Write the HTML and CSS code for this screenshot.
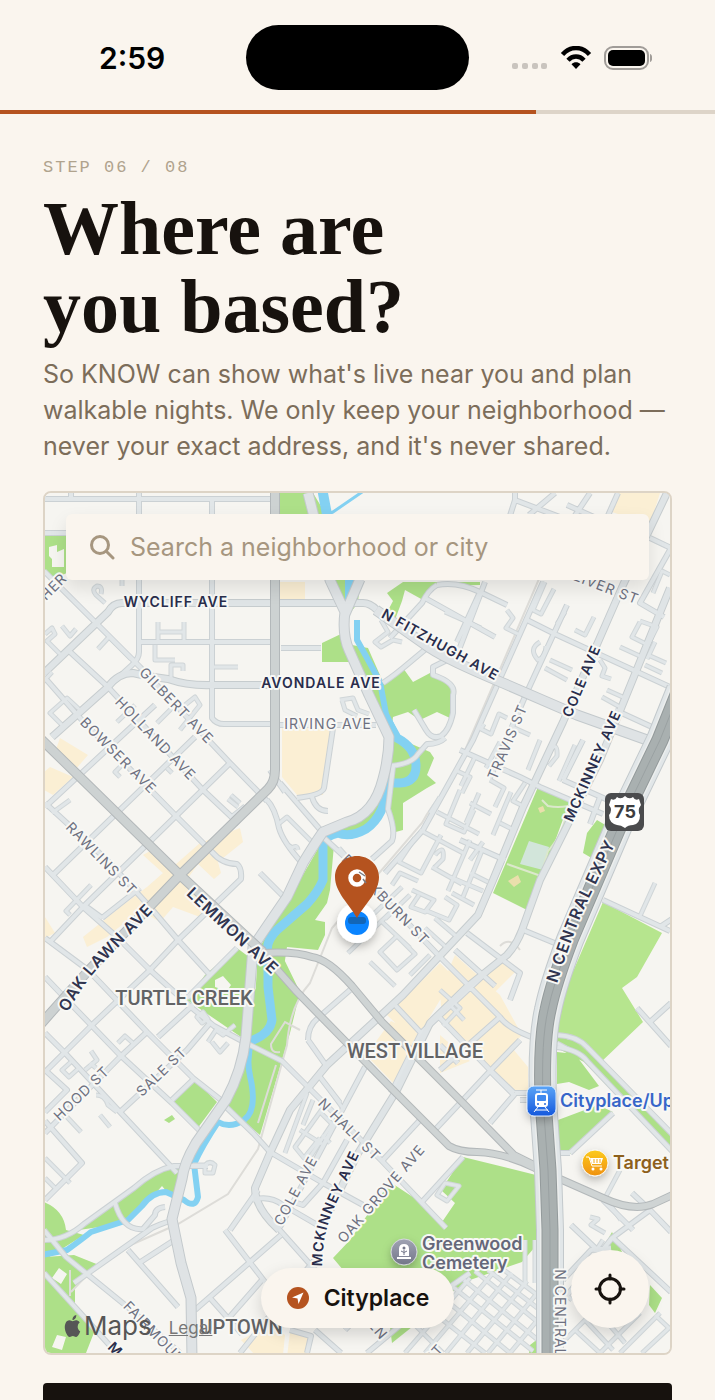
FILE: index.html
```html
<!DOCTYPE html>
<html lang="en">
<head>
<meta charset="utf-8">
<meta name="viewport" content="width=device-width, initial-scale=1">
<title>Where are you based?</title>
<link rel="stylesheet" href="styles.css">
</head>
<body>
<div class="screen">
  <header class="status">
    <time class="status-time">2:59</time>
    <div class="island"></div>
    <div class="status-icons">
      <svg width="36" height="32" viewBox="0 0 36 32" fill="#c9c4be" aria-hidden="true"><rect x="0" y="21" width="6" height="6" rx="2"/><rect x="10" y="21" width="6" height="6" rx="2"/><rect x="20" y="21" width="6" height="6" rx="2"/><rect x="29" y="21" width="6" height="6" rx="2"/></svg>
      <svg width="32" height="24" viewBox="0 0 32 24" fill="none" stroke="#000" stroke-width="4.4" aria-hidden="true"><path d="M2.500 8.500C10-.200 22-.200 29.500 8.500"/><path d="M8 14.200c4.500-5 11.500-5 16 0"/><path d="M11.500 18.200c2.700-2.600 6.300-2.600 9 0L16 23z" fill="#000" stroke="none"/></svg>
      <svg width="48" height="24" viewBox="0 0 48 24" aria-hidden="true"><rect x="1" y="1" width="43" height="22" rx="8" fill="none" stroke="#a09c98" stroke-width="2"/><rect x="4" y="4" width="37" height="16" rx="5"/><path d="M46 8c3 1 3 7 0 8z" fill="#a09c98"/></svg>
    </div>
  </header>
  <div class="progress"><div class="progress-fill"></div></div>

  <main class="content">
    <p class="step">STEP 06 / 08</p>
    <h1>Where are<br>you based?</h1>
    <p class="intro">So KNOW can show what's live near you and plan walkable nights. We only keep your neighborhood — never your exact address, and it's never shared.</p>

    <section class="map">
      <svg class="map-art" viewBox="44 493 627 860" preserveAspectRatio="xMidYMid slice" role="img" aria-label="Neighborhood map">
        <defs>
          <linearGradient id="blue" x2="0" y2="1"><stop stop-color="#5aa5f8"/><stop offset="1" stop-color="#1558dc"/></linearGradient>
          <linearGradient id="gold" x2="0" y2="1"><stop stop-color="#fccb1c"/><stop offset="1" stop-color="#f09110"/></linearGradient>
          <linearGradient id="slate" x2="0" y2="1"><stop stop-color="#a0a3b3"/><stop offset="1" stop-color="#74778a"/></linearGradient>
          <filter id="soft" x="-50%" y="-50%" width="200%" height="200%"><feDropShadow dx="0" dy="4" stdDeviation="4" flood-opacity=".25"/></filter>

          <g id="lanes">
            <path d="M158 622v20M184 622v20M158 632h26M155 645v15h20M171 682v-17h12v6M213 667h25M122 578v8M105 603l-9-8q-5-6 1-9 6 0 4 8M98 649l11-12 22 22M45 634l7-6 3 6-8 7 15 15M62 626l8 10 6-7M50 713l17-15 13 12-16 17zM52 672l-9 10M185 705l10-8 5 8-20 25M172 708l-15 15M117 722l18-17"/>
            <path d="M120 777l-5-5 6-6M70 800l-18 13M172 773l-5-5M238 807l-10-8M240 803l-9-8M91 885l-25 26 4 4M245 806l-15 12M277 825l10-8 24 24M293 852q-8-10-1-4 5-4 6 2M347 857l-8-9"/>
            <path d="M62 1070l10-9 7 7-10 9zM85 1070l12-10-6-9M90 1063l6 5M100 1115l10 12M118 1043l7-7 9 8M197 1017l6-5 5 7-6 4zM208 1042l8-12 7 5 12-10M212 1042l8 10 8-9M96 1095q9 0 12 10l9 7M45 1158l25 25M45 1178l10 10M67 1117l14 15M193 1165h12q5-5 10 0l-2 8h-8v-8"/>
            <path d="M307 1093l-22 60M313 1100l-10 25M325 1105l-30 42 9 11 16-20M300 1130l22 14M320 1112l12 12-24 36M330 1090l14 20M322 1135l8 8"/>
            <path d="M381 620l7 12-13 10 6 5 12-7 9 2M340 700l13-2 5 12 11 4M342 700l3 10 12 6M445 612l36 16M527 692l-17-8M545 582l-12 28 8 4 13-25M575 630l10 5 9-18M507 610l6 8-7 10 12 6M550 660l22 10M545 668l22 12M565 612l-8 12M640 622l-8 15 16 8 9-18-17-6M620 647l22 10M648 655l18 8M645 665l17 8M655 642l-8 17M670 575l-8-4-9 22M607 690l18 8M602 697l18 10M600 660l5 8-3 8 9 3M484 724l-3 5 10 5 8-20 8 4M540 642q-12 7-2 18 8-3 8-14M530 735l-20-9M548 753q10-14 9 3l-8 10"/>
            <path d="M475 757l-14 29M500 742l-14 26M455 770l15 7-8 16M490 780l14 8-9 19M470 803l21 11M479 793l-13 30M511 792l-18 43M500 823l12 6M525 783l-12 18 12 6M540 740l-12 30M575 745l-16 36M460 790l-14 34 18 8 10-22M440 797l-10 16M420 830l45 24M437 812l42 22M415 838l-16 24 22 11 20-38M435 855q10-12 8 4l-8 8M432 867l30 17M470 840l-22 51M483 848l-20 49M450 877l33 14M503 860l-24 55M452 893l22 12M470 873l18 9M392 885l8-12 18 8M412 890l22 10-9 12-14-5 8-12M410 895l-25 24M445 897l12 8-8 15-22-9M362 925l40-38M380 920l30 28M348 953l45-43M380 952l17-16 18 18-18 16zM370 962l25 24M410 975l20-20M425 928l22 20M435 918l21 18M470 860l13-18M600 878l-7 12"/>
            <path d="M655 883l-15 33M570 1050l-13-7M620 1170l-15 28 16 22M590 1217l8 2-7 6 14 8M603 1240l-8 12M440 990l20 18-17 18M450 1005l14 15M445 1183l-8 12 10 6 12-15zM525 1240v45M535 1240v43"/>
            <path d="M430 1310l55 43M442 1297l68 56M453 1287l80 64M464 1280l74 60M475 1271l64 52M488 1270l52 40M500 1267l40 30M405 1353l65-75M425 1353l68-80M446 1353l66-80M467 1353l60-72M488 1353l51-62M510 1353l30-36M415 1325l28 28M560 1345l50-50M575 1330l25 23M585 1320l28 30M595 1308l30 35M600 1353l40-40M620 1353l40-40M560 1290l12 10M642 1353l28-26M655 1315l15 14"/>
          </g>
          <g id="streets">
            <path d="M44 499h231M71 493v6M139 493v159q0 7-8 14l-23 21M212 499v219q4 6 12 6h51M44 533h31M139 642h136M281 648h40M275 725h101M44 571l96 96 90 96 37 38M68 650l40 37 95 103 36 34M45 678l35 40 97 99 35 35q10 12 25 12 5 4 4 15l-63 61-28 30-58 55-47 47"/>
            <path d="M45 807L155 705M53 875L195 737M50 942l33-35 147-144M102 918l38-30M45 803l62 57 43 47 28 33 32 35M45 867l38 40 34 30 33 33 42 38 22 18 30 16 38 19 24 24 76 76 64 67M45 938l43 32 59 62 46 46 28 22M45 977l22 23 53 55 52 48 27 27M45 1033l20 20 55 59 57 61M45 1133l75-76 27-25M120 1112l67-62 23-27M158 1037l35-32M172 1100l22-21M187 998l50-50M102 918l-18-13M45 1200l37-37-37-42M45 1070l22 20-22 22"/>
            <path d="M44 1240q22 0 40-16l50-36q20-18 40-22h34M115 1203q8 28 28 26l12-14q0-7 10-8M222 1103l31 30 17 19 53 31 40 22M253 1200q16-5 30 5l38 22M308 1040l17 24M308 1040q0-14 10-22l32-28M320 1077l20 26M365 1067l-85 160M347 1140l-24 43-20 22-12-4M383 1160l37-40M432 1133l58-62 30-31M463 1157l-42 46M490 1123l24-28-24-24M515 1093h13M393 1003l28 30 38-35 28-26M421 1033l-30 60M440 1018l50 52 24 23M440 1070l60-53M440 957l60 60q8 12 37 22M440 1045l18 18"/>
            <path d="M323 837l24 22 93 98M280 783l43 50M333 728l-9 60q-2 7-27 10M312 797q4 14 16 14M267 800q8 8 12 28 4 14 23 35M260 873l26 26M270 770l15 22M393 767l-5 42q8 22 4 32l-20 18M390 766q22-2 28-12l9-10q12 0 18-6M383 683q12-8 26-20l18-15M437 585q-9 5-15 18l-32 35M437 585q20-4 43 7l27 13M425 598l70 39M485 582l-28 73-24 12v8q24 8 20 20v18q-4 18-12 23-9 4-15-6l-12-20M480 592l-23 50"/>
            <path d="M543 582l-40 90-30 68-50 90-38 43M567 605l-40 87-37 86M527 620l30 15 113 52M515 500l-8 25M515 500l95 36M515 493v7M555 493l-26 22M590 493l-20 30M567 505l45 20M650 538l21 10-31 55 24 14M618 493l-20 45M460 750l60 27 20 10 63 27M563 780l45 20M583 740l-20 40M600 797l-10 27M460 840l45 20M523 930l34 14M467 933l53 40-10 27M455 950l40 36M603 900l67 31M660 927l12-8M615 710l50 23M637 1008l34 38M650 1022l21-19M570 1153l43-40M558 1153h12M603 1200l30 30M612 1237l59 55M561 1303l51-65 38-28 21 22M650 1210l-18-17M571 1225l40 38M563 1280l28-30 20-2"/>
            <path d="M44 1230l22 27 64 52 50 44M44 1273l69 76M128 1250l50 57M74 1283l78-55q20-9 24-7M139 1263l34-22M195 1310l86-75M225 1230l40 52M277 1227l40 45M240 1353l80-100M262 1280l-35 40M210 1298l32 36M290 1330l21 6-4 17M315 1330l26 23M367 1353l60-50 43-30M345 1330l22-22M230 1230l28-40M545 1100h-25"/>
            <path d="M557 1047q22 3 30 14l85 90M557 1035q20 1 30 12l86 88"/>
          </g>
          <g id="avenues">
            <path d="M44 673l64-61q5-9 14-9h241q7 0 14 7l53 38M52 737l56-50q10-14 25-14 12 3 35 6 20 7 45 6h60M667 493l-44 92-60 137-40 85-30 73-15 35-75 80-76 70-37 45-20 43-15 35q0 20 24 42M670 588l-70 172-60 120-18 50q-5 14-15 25l-40 32-37 36-33 67-40 65-35 72M523 807l-30 73"/>
          </g>
          <g id="boulevards">
            <path d="M308 493l22 87 15 32q-3 22 4 38l20 45 20 42q0 20-6 42-9 36-36 43l-24 10q-6 8-20 31l-16 34q-24 35-34 50l-7 90q-4 34-20 63l-30 43q-12 20-14 36l-10 40 9 44 10 35 1 60M345 614l15-35M376 610l54 38q18 12 73 35l74 32 70 25"/>
          </g>
          <path id="arterials" d="M275 493v277q0 12-7 19l-88 86-92 96-48 54M40 738l140 137 83 77"/>
          <path id="collectors" d="M258 948l39 44 96 98 56 56q10 6 28 6 28 1 58 16l68 30q30 14 50 6l30-14M262 953q34-2 50 4 16 2 40 29l30 36 81 81 51 52 30 15"/>
          <path id="freeway" d="M680 690l-20 50-40 83-50 117q-17 45-22 70-7 30-5 90l5 70 2 60v133"/>
          <path id="oaklawn" d="M63 1023Q80 985 106 960L162 902"/>
          <path id="expy" d="M554 993Q575 925 592 892L620 834"/>
          <path id="mck" d="M323 1284Q319 1240 335 1206L367 1138"/>
        </defs>

        <rect x="44" y="493" width="627" height="860" fill="#f6f5f1"/>

        <g fill="#fbefd4">
          <path d="M280 582h25v20h-25zM282 728h51l-10 67h-26l-15-18zM618 493h42l-10 32-38-13zM60 738l28 17-13 15-20-18zM50 767l23 10-20 18-9-5v-18z"/>
          <path d="M143 855L155 848 175 865 200 843 240 828 243 842 218 862 221 873 214 879 198 864 188 878 205 900 200 917 173 907 160 922 140 910 107 937 87 947 83 937 123 905 147 887 163 873zM45 917l10 16-10 5z"/>
          <path d="M387 1015L440 963 457 980 440 1000 422 1030 408 1035zM440 990L455 955 500 995 522 1035 490 1070 442 1022zM366 1055l25-34 30 14-28 48zM440 1035l30 26-30 12zM490 1071l23-22 15 18v23h-17zM503 958l14 12-30 30-16-12zM241 1340l29-16 15 11-2 20h-28zM290 1332l20 5-4 20h-19z"/>
        </g>
        <g fill="#ade088">
          <path d="M279 493h34l17 28h-51zM44 535h31v34l-25 12-6-9zM332 580h28l-2 23-11 14zM322 643l21-10 8 29h-29zM403 582h77v3l-43 1-14 14-18-10-3 11-9 24-8-9 8-15-6-8zM107 606h8l-4 4z"/>
          <path d="M352 645L368 648 383 682 403 668 413 682 430 673 450 683 456 697 450 718 437 712 420 720 408 712 393 717 391 735 430 752 434 758 427 775 436 783 427 788 403 803 403 830 392 833 390 785 380 808 365 830 335 834 360 815 385 785 390 745 370 690z"/>
          <path d="M323 840L334 845 330 890 327 903 315 920 325 922 325 935 318 950 287 947 285 960 280 985 268 1000 255 1000 258 950 300 880z"/>
          <path d="M255 990L282 955 300 992 290 1033 280 1067 260 1135 222 1103 238 1080 247 1030z"/>
          <path d="M538 787l32 13-28 77-15 33-34-17zM597 820l10 6 2 14-14 20-12-7 4-20zM557 1052l18 2 24 32-10 4-20-8-12 2zM570 1040h9l92 94v18l-87-90-27-14v-12zM558 1120l40-15 15 7-42 42h-13z"/>
          <path d="M463 1157L536 1175 541 1240 522 1262 470 1280 440 1300 360 1290 333 1258 350 1240 390 1182 425 1205 440 1225 455 1203 441 1190z"/>
          <path d="M237 948l16 12v40l-12 37-54-37 18-25zM194 1079l23 23-20 27-25-26zM178 1166l5 18-11 14-10-12-15 17-20 20-55 8 83-59zM44 1202q20 8 22 28l18 5-40 25v-58zM44 1257l30-2 25 10-24 23v22l20 20-9 23H44zM612 1232l10 20-30 15zM650 1285l12 13-7 15-6-8zM390 1327h22l-20 16zM530 1345l9-7v15h-10zM164 1120l8-5 3 4-6 4zM512 1030l22 10v-3z"/>
        </g>
        <path d="M603 902L662 933 637 977 622 988 643 1022 600 1063 573 1040 555 1035 565 990z" fill="#b6e58e"/>
        <g fill="#f6f5f1"><path d="M49 547l8-2v7l7-3v18h-12v-8l-3-3zM215 980l8-4 8 9-4 6-12-4zM59 1268l8 6-6 10-9-6zM57 1335l9 2-4 13-10-3z"/></g>
        <path d="M529 841l20 6-6 23-23-6z" fill="#d2e5da"/><path d="M508 881l10-6 3 7-7 5zM538 808l5-2 2 5-5 2z" fill="#eadfac"/>
        <path d="M542 800l6 6q10 2 20 0-4 28-20 45l-7 24M507 864l34 12" fill="none" stroke="#dce8cc" stroke-width="2"/>

        <g fill="none" stroke="#83d1f2" stroke-linejoin="round">
          <path d="M325 515l8-3 32-22" stroke-width="3"/><path d="M322 488l6 32M350 578v22" stroke-width="10"/>
          <path d="M357 620v20l10 18 13 24 6 32 11 22" stroke-width="6"/>
          <path d="M388 722L397 738Q416 748 416 766Q416 782 400 783H387Q386 815 366 829Q350 838 338 833Q322 836 323 848V880Q318 892 307 904L277 930Q265 942 268 953V987L272 1020Q270 1035 248 1042" stroke-width="9"/>
          <path d="M252 1040q-6 18-2 36q8 34-6 44-14 9-26 2-16 24-24 42l4 33q-3 12-14 3l-18-8q-14 0-24 14l-14 14-37 12q-10 8-24 18l-25 5" stroke-width="6"/>
        </g>

        <path d="M545 565l-95 220q-20 22-28 38l-90 105-22 55q-20 22-23 62l-29 104-30 45-50 30-45 20-45 30-17 18M300 1030l-15-8-14 22q0 10 9 8M276 1065l-18 58M500 946q10-10 20 4M70 1270v26" class="rail"/>
        <use href="#lanes" class="lane edge"/><use href="#streets" class="street edge"/><use href="#avenues" class="avenue edge"/>
        <use href="#lanes" class="lane"/><use href="#streets" class="street"/><use href="#avenues" class="avenue"/>
        <use href="#collectors" class="collector edge"/><use href="#collectors" class="collector"/>
        <use href="#boulevards" class="boulevard edge"/><use href="#boulevards" class="boulevard"/>
        <use href="#arterials" class="arterial edge"/><use href="#arterials" class="arterial"/>
        <use href="#freeway" class="frontage edge"/><use href="#freeway" class="frontage"/><use href="#freeway" class="shoulder"/><use href="#freeway" class="freeway edge"/><use href="#freeway" class="freeway"/><use href="#freeway" class="median"/>

        <g class="label minor">
          <text transform="translate(57 590) rotate(-45)">HER</text>
          <text x="328" y="729">IRVING AVE</text>
          <text transform="translate(173 709) rotate(46)">GILBERT AVE</text>
          <text transform="translate(152 742) rotate(46)">HOLLAND AVE</text>
          <text transform="translate(115 759) rotate(45)">BOWSER AVE</text>
          <text transform="translate(98 862) rotate(46)">RAWLINS ST</text>
          <text transform="translate(599 590) rotate(21)">OLIVER ST</text>
          <text transform="translate(512 744) rotate(-67)">TRAVIS ST</text>
          <text transform="translate(382 903) rotate(46)">BLACKBURN ST</text>
          <text transform="translate(85 1097) rotate(-44)">HOOD ST</text>
          <text transform="translate(165 1075) rotate(-44)">SALE ST</text>
          <text transform="translate(346 1133) rotate(45)">N HALL ST</text>
          <text transform="translate(300 1193) rotate(-62)">COLE AVE</text>
          <text transform="translate(385 1197) rotate(-49)">OAK GROVE AVE</text>
          <text transform="translate(163 1349) rotate(46)">FAIRMOUNT ST</text>
          <text transform="translate(555 1336) rotate(90)">N CENTRAL EXPY</text>
          <text transform="translate(365 1322) rotate(50)">ALLEN</text>
          <text transform="translate(438 1357) rotate(-48)">ST</text>
        </g>
        <g class="label major">
          <text x="176" y="607">WYCLIFF AVE</text>
          <text x="321" y="688">AVONDALE AVE</text>
          <text transform="translate(438 649) rotate(29)">N FITZHUGH AVE</text>
          <text transform="translate(586 683) rotate(-67)">COLE AVE</text>
          <text transform="translate(597 768) rotate(-66)">MCKINNEY AVE</text>
          <text><textPath href="#mck" startOffset="50%">MCKINNEY AVE</textPath></text>
          <text transform="translate(112 1353) rotate(45)">M</text>
        </g>
        <g class="label trunk">
          <text transform="translate(229 935) rotate(43)">LEMMON AVE</text>
          <text><textPath href="#oaklawn" startOffset="50%">OAK LAWN AVE</textPath></text>
          <text><textPath href="#expy" startOffset="50%">N CENTRAL EXPY</textPath></text>
        </g>
        <g class="label district">
          <text x="184" y="1005">TURTLE CREEK</text><text x="415" y="1058">WEST VILLAGE</text><text x="241" y="1334">UPTOWN</text>
        </g>

        <g><rect x="605" y="793" width="39" height="38" rx="6" fill="#4a4b4d"/><path d="M611 799q4 2 6-2 4 3 8-1 4 4 8 1 2 4 6 2l2 6q-4 5-1 10 0 9-7 10-5 0-8 3-4-3-8-3-8-2-8-10 4-5 0-10z" fill="#fff"/><text x="625" y="818" class="shield">75</text></g>

        <g class="label poi">
          <g filter="url(#soft)"><rect x="527" y="1086" width="29" height="30" rx="7" fill="url(#blue)" stroke="#dceafb"/></g>
          <g fill="none" stroke="#fff"><rect x="535" y="1093" width="13" height="14" rx="3" fill="#fff" stroke="none"/><path d="M536 1090h11M541 1090v3M538 1107l-4 5M545 1107l4 5M535 1110h13"/><rect x="537" y="1095" width="9" height="6" rx="1" fill="#3f89ef" stroke="none"/><circle cx="538" cy="1104" r="1" fill="#286bdc" stroke="none"/><circle cx="545" cy="1104" r="1" fill="#286bdc" stroke="none"/></g>
          <text x="560" y="1107" fill="#3766c9">Cityplace/Uptown</text>
          <g filter="url(#soft)"><circle cx="595" cy="1163" r="13" fill="url(#gold)"/></g>
          <path d="M586 1157h3l3 9h10" fill="none" stroke="#fff"/><path d="M590 1158h13l-2 6h-9z" fill="#fff" stroke="none"/><path d="M594 1159v4M597 1159v4M600 1159v4" fill="none" stroke="#f5a915"/><g fill="#fff" stroke="none"><circle cx="593" cy="1169" r="1.500"/><circle cx="601" cy="1169" r="1.500"/></g>
          <text x="613" y="1169" fill="#8d601c">Target</text>
          <g filter="url(#soft)"><circle cx="404" cy="1252" r="13" fill="url(#slate)" stroke="#d5d6dc"/></g>
          <path d="M399 1256v-7q0-5 5-5t5 5v7zM397 1257h14v2h-14z" fill="#fff" stroke="none"/><path d="M404 1255v-5M401 1251q3 3 6 0" fill="none" stroke="#74778a"/><circle cx="404" cy="1248" r="1.500" fill="#74778a" stroke="none"/>
          <text x="422" y="1250" fill="#65677a">Greenwood</text><text x="422" y="1269" fill="#65677a">Cemetery</text>
        </g>

        <g filter="url(#soft)"><circle cx="357" cy="923" r="20" fill="#fff"/></g>
        <circle cx="357" cy="923" r="12" fill="#0a84ff"/><rect x="348" y="917" width="18" height="7" rx="3" fill="#1266b8"/>
        <path d="M357 856c12 0 22 9 22 21 0 15-14 27-22 41-8-14-22-26-22-41 0-12 10-21 22-21z" fill="#b5531f"/>
        <circle cx="357" cy="878" r="6.500" fill="none" stroke="#fff" stroke-width="4.500"/><path d="M359 872l6 4M363 879l3 4" stroke="#777b83" stroke-width="1.500"/>
      </svg>

      <div class="attribution">
        <svg width="19" height="22" viewBox="0 0 24 24" preserveAspectRatio="none" fill="#565656" aria-hidden="true"><path d="M12.152 6.896c-.948 0-2.415-1.078-3.960-1.040-2.040.027-3.910 1.183-4.961 3.014-2.117 3.675-.546 9.103 1.519 12.090 1.013 1.454 2.208 3.090 3.792 3.039 1.520-.065 2.090-.987 3.935-.987 1.831 0 2.350.987 3.960.948 1.637-.026 2.676-1.480 3.676-2.948 1.156-1.688 1.636-3.325 1.662-3.415-.039-.013-3.182-1.221-3.220-4.857-.026-3.040 2.480-4.494 2.597-4.559-1.429-2.090-3.623-2.324-4.390-2.376-2-.156-3.675 1.090-4.610 1.090zM15.530 3.830c.843-1.012 1.400-2.427 1.245-3.830-1.207.052-2.662.805-3.532 1.818-.780.896-1.454 2.338-1.273 3.714 1.338.104 2.715-.688 3.559-1.701"/></svg>
        <span class="maps-name">Maps</span>
        <a class="legal" href="#legal">Legal</a>
      </div>

      <div class="controls">
        <label class="search">
          <svg width="26" height="26" viewBox="0 0 26 26" fill="none" stroke="#a6967f" stroke-width="3" stroke-linecap="round" aria-hidden="true"><circle cx="11" cy="11" r="8.500"/><path d="M17.500 17.500L24 24"/></svg>
          <input type="search" placeholder="Search a neighborhood or city" aria-label="Search a neighborhood or city">
        </label>
        <div class="controls-bottom">
          <button class="place" type="button">
            <svg width="24" height="24" viewBox="0 0 24 24" aria-hidden="true"><circle cx="12" cy="12" r="11" fill="#b5531f"/><path d="M17.500 6.500L6 11.500l5.500 1L12.500 18z" fill="#fff"/></svg>
            Cityplace
          </button>
          <button class="locate" type="button" aria-label="Use my location">
            <svg width="32" height="32" viewBox="0 0 32 32" fill="none" stroke="#17120e" stroke-width="3" stroke-linecap="round" aria-hidden="true"><circle cx="16" cy="16" r="10.500"/><path d="M16 2v4M16 26v4M2 16h4M26 16h4"/></svg>
          </button>
        </div>
      </div>
    </section>

    <button class="cta" type="button" aria-label="Continue"></button>
  </main>
</div>
</body>
</html>
```
FILE: styles.css
```css
* { box-sizing: border-box; }
body { margin: 0; background: #faf5ee; color: #17120e; font-family: Inter, "Liberation Sans", sans-serif; }
h1, p { margin: 0; }
button { border: 0; font: inherit; color: inherit; }
.screen { height: 100vh; overflow: hidden; }

.status { display: grid; grid-template-columns: 147px auto 1fr; align-items: center; height: 110px; padding: 5px 63px 0 99px; }
.status-time { font-size: 30px; font-weight: 600; color: #000; }
.island { width: 223px; height: 65px; border-radius: 33px; background: #000; }
.status-icons { display: flex; align-items: center; justify-content: flex-end; gap: 12px; }

.progress { height: 4px; background: #ddd4c8; }
.progress-fill { width: 75%; height: 100%; background: #b5531f; }

.content { padding: 42px 43px 0; }
.step { font: 17px/24px "Liberation Mono", monospace; letter-spacing: 2px; color: #b0a38d; }
h1 { margin-top: 9px; font: bold 76px/78px "Liberation Serif", serif; }
.intro { margin-top: 11px; font-size: 25px; line-height: 36px; color: #7c6d5a; }

.map { position: relative; margin-top: 27px; aspect-ratio: 629 / 864; border: 2px solid #ddd4c6; border-radius: 8px; overflow: hidden; }
.map-art { position: absolute; inset: 0; width: 100%; height: 100%; }
.map-art use { fill: none; stroke-linejoin: round; stroke-linecap: butt; }
.lane { stroke: #e1e6e8; stroke-width: 3px; }
.lane.edge { stroke: #d0d6d8; stroke-width: 5px; }
.street { stroke: #e1e6e8; stroke-width: 4px; }
.street.edge { stroke: #cbd1d4; stroke-width: 6px; }
.avenue { stroke: #dfe4e6; stroke-width: 6px; }
.avenue.edge { stroke: #c6ccce; stroke-width: 8px; }
.collector { stroke: #cfd4d4; stroke-width: 6px; }
.collector.edge { stroke: #b3b8ba; stroke-width: 8px; }
.boulevard { stroke: #dfe3e5; stroke-width: 9px; }
.boulevard.edge { stroke: #c3c9cc; stroke-width: 11px; }
.arterial { stroke: #cdd2d2; stroke-width: 8px; }
.arterial.edge { stroke: #b3b8ba; stroke-width: 10px; }
.frontage { stroke: #e1e6e8; stroke-width: 26px; }
.frontage.edge { stroke: #c3c9cc; stroke-width: 28px; }
.shoulder { stroke: #eceeed; stroke-width: 20px; }
.freeway { stroke: #a9b0b0; stroke-width: 15px; }
.freeway.edge { stroke: #939a9b; stroke-width: 17px; }
.median { stroke: #9aa1a2; stroke-width: 1px; }
.rail { fill: none; stroke: #dddcd8; stroke-width: 2px; }

.label { text-anchor: middle; stroke: #f8f8f5; stroke-width: 4px; stroke-linejoin: round; }
.label text { paint-order: stroke; }
.minor { font-size: 14px; font-weight: 400; letter-spacing: 1px; fill: #6d7080; }
.major { font-size: 14px; font-weight: 600; letter-spacing: 1px; fill: #292d4c; }
.trunk { font-size: 16px; font-weight: 600; letter-spacing: 1px; fill: #30344f; }
.district { font: 500 20px Roboto, sans-serif; fill: #626365; }
.poi { font-size: 18px; font-weight: 600; text-anchor: start; }
.poi circle, .poi path, .poi rect { stroke-width: 1px; }
.shield { font-size: 18px; font-weight: 700; text-anchor: middle; fill: #3c3d40; }

.attribution { position: absolute; left: 18px; bottom: 12px; display: flex; align-items: center; color: #565656; }
.maps-name { margin-left: 2px; font-size: 26px; }
.legal { margin: 5px 0 0 17px; font-size: 17px; color: #777; }

.controls { position: relative; display: flex; flex-direction: column; justify-content: space-between; height: 100%; padding: 21px 21px 25px; }
.search { display: flex; align-items: center; gap: 15px; height: 66px; padding: 0 23px; border-radius: 6px; background: #faf5ee; box-shadow: 0 8px 18px rgb(0 0 0 / 10%); }
.search input { flex: 1; min-width: 0; padding: 0; border: 0; outline: 0; background: none; font: inherit; font-size: 25px; }
.search input::placeholder { color: #a6967f; opacity: 1; }
.controls-bottom { display: grid; grid-template-columns: 1fr auto 1fr; align-items: end; }
.place { grid-column: 2; display: flex; align-items: center; gap: 14px; height: 60px; padding: 0 25px; border-radius: 30px; background: #faf5ee; font-size: 23px; font-weight: 600; box-shadow: 0 6px 16px rgb(0 0 0 / 15%); }
.locate { justify-self: end; display: grid; place-items: center; width: 78px; height: 78px; border-radius: 50%; background: #faf5ee; box-shadow: 0 6px 16px rgb(0 0 0 / 15%); }

.cta { display: block; width: 100%; height: 96px; margin-top: 28px; border-radius: 4px; background: #17120e; }
```
